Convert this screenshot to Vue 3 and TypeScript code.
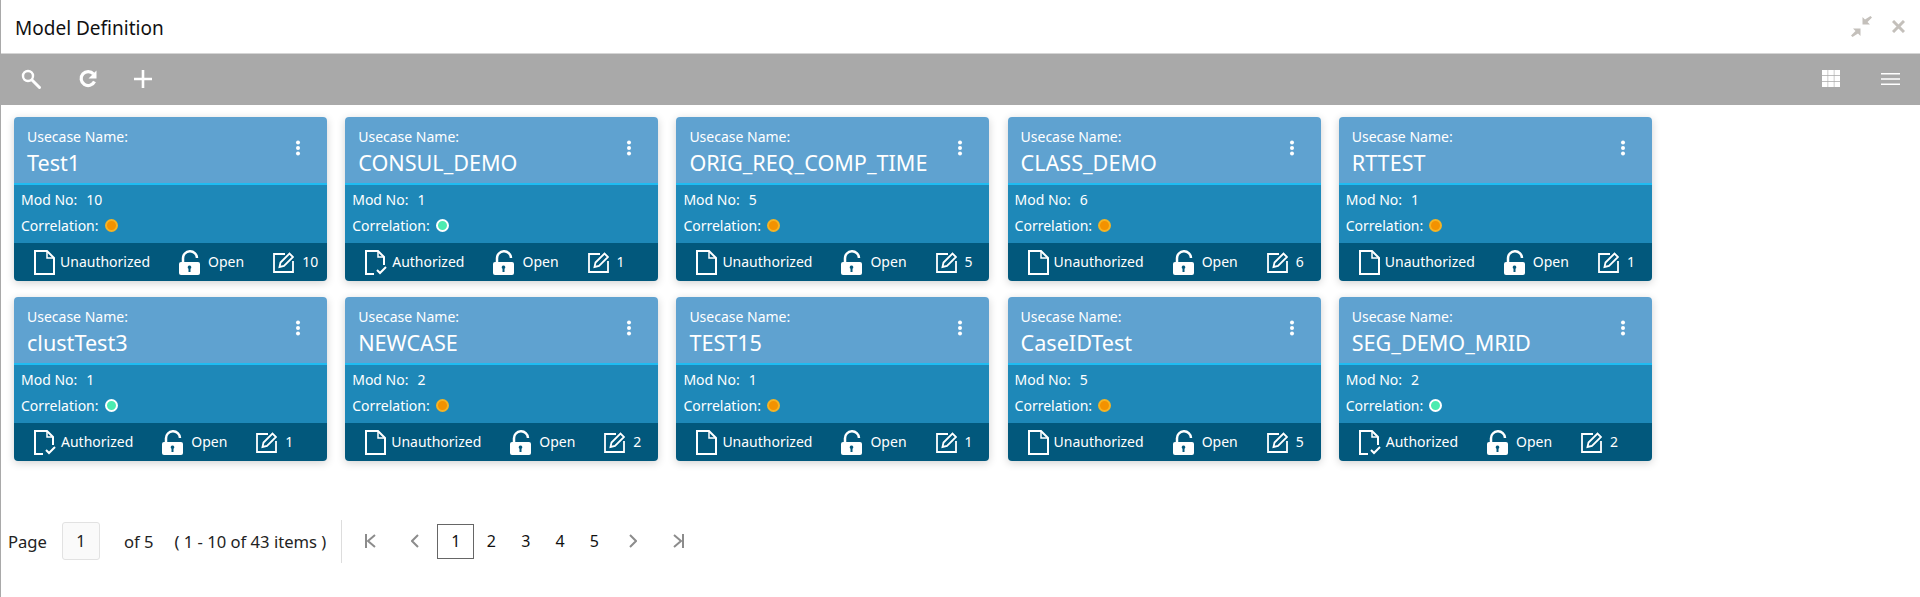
<script setup lang="ts">
interface Usecase {
  name: string
  mod: number
  authorized: boolean
  edits: number
}

const usecases: Usecase[] = [
  { name: 'Test1', mod: 10, authorized: false, edits: 10 },
  { name: 'CONSUL_DEMO', mod: 1, authorized: true, edits: 1 },
  { name: 'ORIG_REQ_COMP_TIME', mod: 5, authorized: false, edits: 5 },
  { name: 'CLASS_DEMO', mod: 6, authorized: false, edits: 6 },
  { name: 'RTTEST', mod: 1, authorized: false, edits: 1 },
  { name: 'clustTest3', mod: 1, authorized: true, edits: 1 },
  { name: 'NEWCASE', mod: 2, authorized: false, edits: 2 },
  { name: 'TEST15', mod: 1, authorized: false, edits: 1 },
  { name: 'CaseIDTest', mod: 5, authorized: false, edits: 5 },
  { name: 'SEG_DEMO_MRID', mod: 2, authorized: true, edits: 2 },
]
const pages = [1, 2, 3, 4, 5]
</script>

<template>
  <div class="window">
    <header class="title-bar">
      <h1>Model Definition</h1>
      <div class="win-actions">
        <svg width="21" height="21" viewBox="0 0 21 21" fill="#c4c0bb">
          <path d="M19.500 0L21 1.500l-4.500 4.500 2.500 2.500h-7.500V1l2.500 2.500z" />
          <path d="M1.500 21L0 19.500l4.500-4.500-2.500-2.500h7.500V20l-2.500-2.500z" />
        </svg>
        <svg width="13" height="13" viewBox="0 0 13 13" stroke="#c4c0bb" stroke-width="3" fill="none">
          <path d="M1 1l11 11M12 1L1 12" />
        </svg>
      </div>
    </header>

    <div class="toolbar">
      <div class="tools">
        <svg width="22" height="22" viewBox="0 0 22 22" fill="none" stroke="#fff">
          <circle cx="8" cy="8" r="5" stroke-width="2.400" />
          <path d="M12 12l7.500 7.500" stroke-width="3" stroke-linecap="round" />
        </svg>
        <svg width="22" height="22" viewBox="0 0 22 22" fill="none" stroke="#fff">
          <path d="M17.500 13.500a7 7 0 1 1-1-7.500" stroke-width="3.200" />
          <path d="M19.500 2.500v8h-8z" fill="#fff" stroke="none" />
        </svg>
        <svg width="18" height="18" viewBox="0 0 18 18" stroke="#fff" stroke-width="2.600">
          <path d="M9 0v18M0 9h18" />
        </svg>
      </div>
      <div class="views">
        <svg width="18" height="17" viewBox="0 0 18 17" fill="#fff">
          <path d="M0 0h5.600v5.300H0zM6.200 0h5.600v5.300H6.200zM12.400 0H18v5.300h-5.600zM0 5.900h5.600v5.200H0zM6.200 5.900h5.600v5.200H6.200zM12.400 5.900H18v5.200h-5.600zM0 11.700h5.600V17H0zM6.200 11.700h5.600V17H6.200zM12.400 11.700H18V17h-5.600z" />
        </svg>
        <svg width="19" height="12" viewBox="0 0 19 12" fill="#fff">
          <path d="M0 0h19v1.600H0zM0 5.200h19v1.600H0zM0 10.400h19V12H0z" />
        </svg>
      </div>
    </div>

    <main class="cards">
      <article v-for="item in usecases" :key="item.name" class="card">
        <div class="card-head">
          <div>
            <div class="label">Usecase Name:</div>
            <div class="name">{{ item.name }}</div>
          </div>
          <svg class="kebab" width="6" height="16" viewBox="0 0 6 16" fill="#fff">
            <circle cx="3" cy="2.500" r="2" />
            <circle cx="3" cy="8" r="2" />
            <circle cx="3" cy="13.500" r="2" />
          </svg>
        </div>
        <div class="card-body">
          <div class="row"><span>Mod No:</span><span>{{ item.mod }}</span></div>
          <div class="row">
            <span>Correlation:</span>
            <i class="dot" :class="item.authorized ? 'green' : 'orange'"></i>
          </div>
        </div>
        <div class="card-foot">
          <div class="stat doc">
            <svg v-if="!item.authorized" width="21" height="25" viewBox="0 0 21 25" fill="none" stroke="#fff" stroke-width="2">
              <path d="M1 1h12l7 7v16H1z" />
              <path d="M13 1v7h7" stroke-width="1.500" />
            </svg>
            <svg v-else width="22" height="25" viewBox="0 0 22 25" fill="none" stroke="#fff" stroke-width="2">
              <path d="M9 24H1V1h12l6 6v8" />
              <path d="M13 1v6h6" stroke-width="1.500" />
              <path d="M12 20l3 3 6-6" />
            </svg>
            <span class="txt">{{ item.authorized ? 'Authorized' : 'Unauthorized' }}</span>
          </div>
          <div class="stat">
            <svg width="21" height="25" viewBox="0 0 21 25">
              <path d="M4 12V8.500a7 7 0 0 1 14-.5" fill="none" stroke="#fff" stroke-width="2.500" />
              <path d="M2 12h17a2 2 0 0 1 2 2v9a2 2 0 0 1-2 2H2a2 2 0 0 1-2-2v-9a2 2 0 0 1 2-2z" fill="#fff" />
              <path d="M10.500 15.500a1.800 1.800 0 0 1 1 3.300V22h-2v-3.200a1.800 1.800 0 0 1 1-3.300z" fill="#02587c" />
            </svg>
            <span class="txt">Open</span>
          </div>
          <div class="stat">
            <svg width="21" height="21" viewBox="0 0 21 21" fill="none" stroke="#fff" stroke-width="1.800">
              <path d="M12 2H1v18h19V9" />
              <path d="M6.500 15l1-4.500L16.500 1.500l3.500 3.500-9 9z" />
            </svg>
            <span class="txt">{{ item.edits }}</span>
          </div>
        </div>
      </article>
    </main>

    <footer class="pager">
      <span>Page</span>
      <span class="page-input">1</span>
      <span class="of">of 5</span>
      <span class="range">( 1 - 10 of 43 items )</span>
      <span class="sep"></span>
      <svg class="nav first" width="11" height="14" viewBox="0 0 11 14" fill="none" stroke="#8c8c8c" stroke-width="2">
        <path d="M1 0v14M10 1L3 7l7 6" />
      </svg>
      <svg class="nav prev" width="8" height="14" viewBox="0 0 8 14" fill="none" stroke="#8c8c8c" stroke-width="2">
        <path d="M7 1L1 7l6 6" />
      </svg>
      <div class="nums">
        <span v-for="p in pages" :key="p" class="num" :class="{ active: p === 1 }">{{ p }}</span>
      </div>
      <svg class="nav next" width="8" height="14" viewBox="0 0 8 14" fill="none" stroke="#8c8c8c" stroke-width="2">
        <path d="M1 1l6 6-6 6" />
      </svg>
      <svg class="nav last" width="11" height="14" viewBox="0 0 11 14" fill="none" stroke="#8c8c8c" stroke-width="2">
        <path d="M10 0v14M1 1l7 6-7 6" />
      </svg>
    </footer>
  </div>
</template>

<style>
html,
body {
  margin: 0;
  background: #fff;
}
</style>

<style scoped>
.window {
  height: 597px;
  box-sizing: border-box;
  border-left: 1px solid #a9a9a9;
  font-family: 'Noto Sans', 'Open Sans', sans-serif;
  overflow: hidden;
}
.title-bar {
  height: 54px;
  box-sizing: border-box;
  border-bottom: 1px solid #d5d5d5;
  display: flex;
  align-items: center;
  justify-content: space-between;
  padding: 3px 15px 0 14px;
}
h1 {
  margin: 0;
  font-size: 19px;
  font-weight: 400;
  color: #111;
}
.win-actions {
  display: flex;
  align-items: center;
  gap: 20px;
  margin-top: -3px;
}
.toolbar {
  height: 51px;
  background: #a9a9a9;
  display: flex;
  align-items: center;
  justify-content: space-between;
  padding: 0 20px 2px 19px;
  box-sizing: border-box;
}
.tools {
  display: flex;
  align-items: center;
  gap: 35px;
}
.views {
  display: flex;
  align-items: center;
  gap: 41px;
}
.cards {
  display: flex;
  flex-wrap: wrap;
  gap: 16px 18.2px;
  padding: 12px 13px 0;
  width: 1660px;
}
.card {
  width: 313px;
  height: 164px;
  border-radius: 4px;
  overflow: hidden;
  color: #fff;
  box-shadow: 0 2px 8px rgba(0, 0, 0, 0.18);
  display: flex;
  flex-direction: column;
}
.card-head {
  height: 56px;
  background: #5fa2d0;
  border-bottom: 2px solid #1fbcf2;
  display: flex;
  justify-content: space-between;
  padding: 10px 26px 0 13px;
}
.label {
  font-size: 14px;
  line-height: 20px;
}
.name {
  font-size: 21.6px;
  line-height: 32px;
}
.kebab {
  margin-top: 13px;
}
.card-body {
  flex: 1;
  background: #1e88b8;
  padding: 1px 7px;
  font-size: 14px;
}
.row {
  height: 26px;
  display: flex;
  align-items: center;
  gap: 6px;
}
.row span + span {
  margin-left: 3px;
}
.dot {
  width: 9px;
  height: 9px;
  border-radius: 50%;
  border: 2px solid #fff;
}
.dot.orange {
  background: #f39200;
  border-color: #f5b324;
}
.dot.green {
  background: #4cebb0;
  border-color: #fff;
}
.card-foot {
  height: 38px;
  background: #02587c;
  display: flex;
  align-items: center;
  gap: 29px;
  padding-left: 20px;
  font-size: 14px;
}
.stat {
  display: flex;
  align-items: center;
  gap: 8px;
}
.stat.doc {
  gap: 5px;
}
.txt {
  position: relative;
  top: -1px;
}
.pager {
  display: flex;
  align-items: center;
  height: 44px;
  margin-top: 58px;
  padding-left: 7px;
  font-size: 16.600px;
  color: #222;
}
.page-input {
  width: 38px;
  height: 38px;
  box-sizing: border-box;
  margin-left: 15px;
  border: 1px solid #e2e2e2;
  border-radius: 3px;
  background: #fafafa;
  display: flex;
  align-items: center;
  justify-content: center;
  font-size: 16px;
}
.of {
  margin-left: 24px;
}
.range {
  margin-left: 21px;
}
.sep {
  width: 1px;
  height: 43px;
  background: #ddd;
  margin: 0 23px 0 15px;
}
.prev {
  margin-left: 35px;
}
.nums {
  display: flex;
  align-items: center;
  margin-left: 18px;
}
.num {
  width: 34.300px;
  height: 35px;
  display: flex;
  align-items: center;
  justify-content: center;
  box-sizing: border-box;
  color: #111;
  font-size: 16px;
}
.num.active {
  width: 37px;
  border: 1px solid #666;
}
.next {
  margin-left: 18px;
}
.last {
  margin-left: 36px;
}
</style>
